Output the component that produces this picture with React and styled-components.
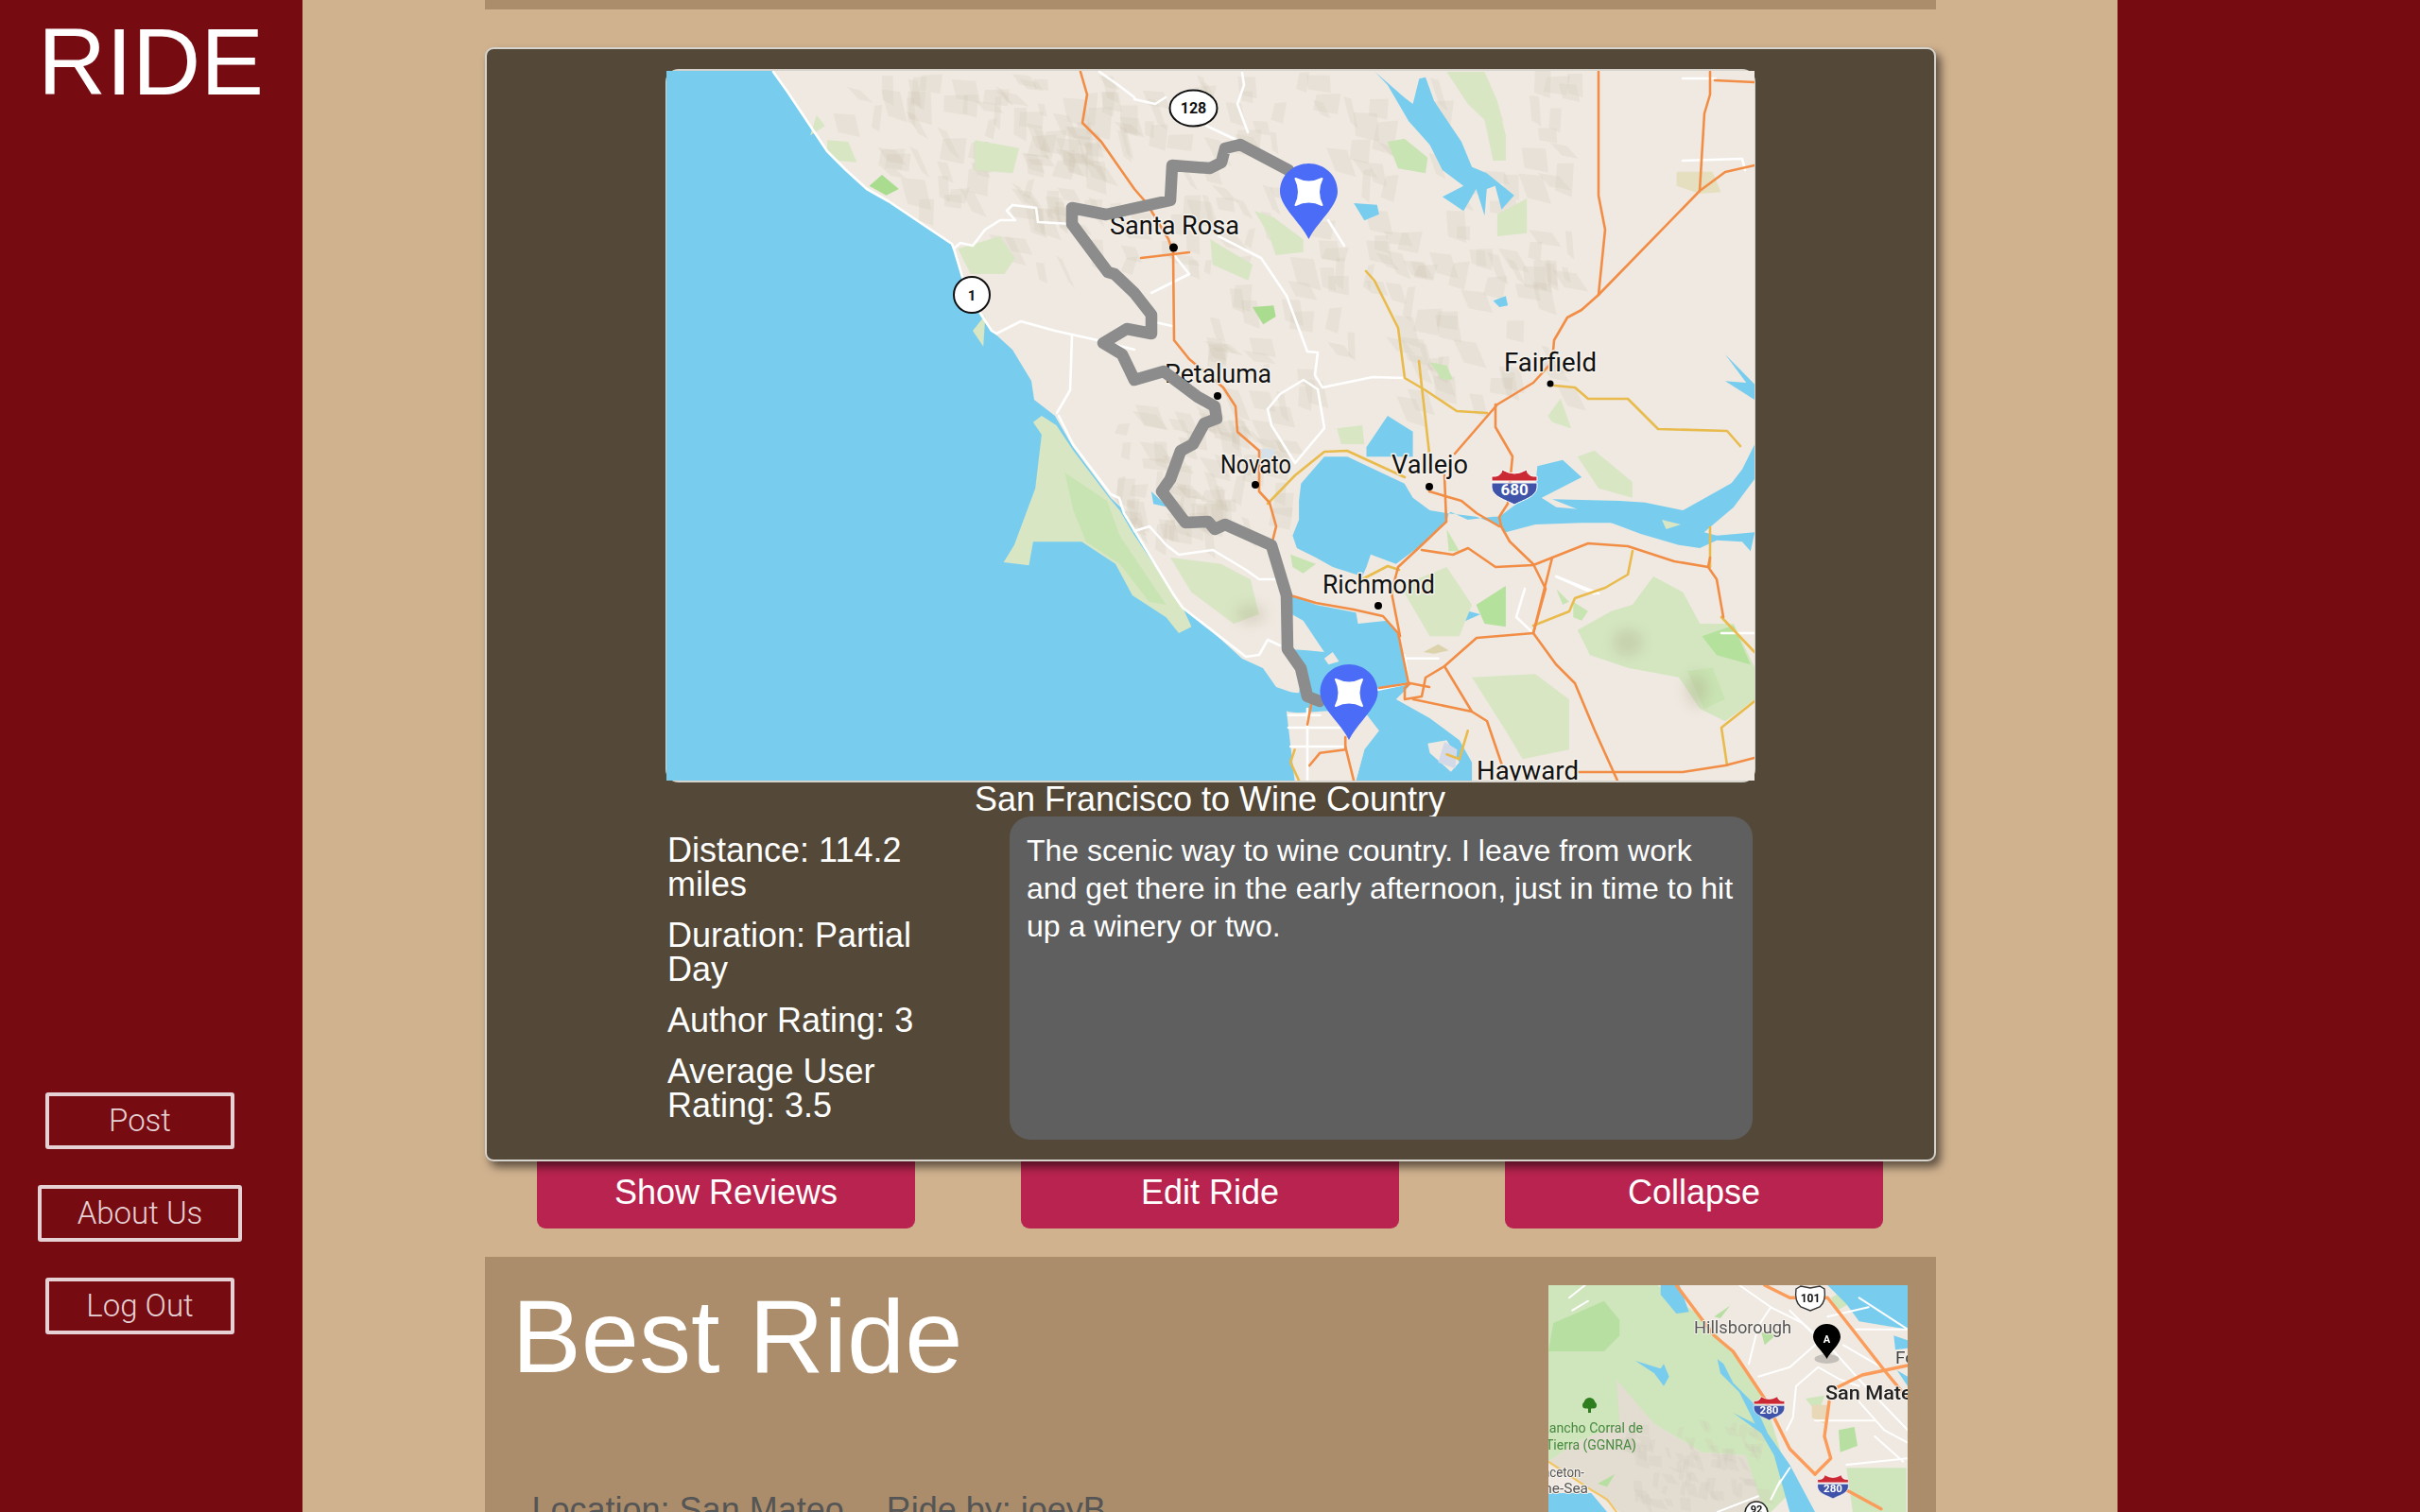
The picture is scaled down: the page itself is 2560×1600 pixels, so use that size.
import React from "react";
import styled, { createGlobalStyle } from "styled-components";

const Global = createGlobalStyle`
  html, body { margin: 0; padding: 0; height: 100%; overflow: hidden; background: #d0b28f; }
  #root { height: 100%; }
`;

const SANS = `"Liberation Sans", Arial, sans-serif`;
const THIN = `Roboto, "Liberation Sans", sans-serif`;

const Page = styled.div`
  display: grid;
  grid-template-columns: 320px 1fr 320px;
  height: 1600px;
  overflow: hidden;
  font-family: ${SANS};
  background: #d0b28f;
`;
const Sidebar = styled.aside`
  background: #770b12;
  display: flex;
  flex-direction: column;
`;
const RightRail = styled.aside`
  background: #770b12;
`;
const Brand = styled.div`
  font-family: ${SANS};
  font-size: 100px;
  line-height: 100px;
  color: #fff;
  padding: 15px 0 0 40px;
`;
const Nav = styled.nav`
  margin-top: 1041px;
  width: 296px;
  display: flex;
  flex-direction: column;
  align-items: center;
  gap: 38px;
`;
const NavButton = styled.button`
  width: ${(p) => (p.$wide ? 216 : 200)}px;
  height: 60px;
  box-sizing: border-box;
  background: transparent;
  border: 4px solid #e6d2d5;
  border-radius: 3px;
  color: #e6d2d5;
  font-family: ${THIN};
  font-weight: 300;
  font-size: 33px;
  padding: 0 0 2px;
`;
const Main = styled.main`
  min-width: 0;
`;
const Column = styled.div`
  width: 1535px;
  margin: 0 auto;
  display: flex;
  flex-direction: column;
`;
const PeekBar = styled.div`
  height: 10px;
  background: #ab8d6b;
  margin-bottom: 40px;
`;
const RideCard = styled.section`
  position: relative;
  z-index: 1;
  box-sizing: border-box;
  height: 1179px;
  background: #544838;
  border: 2px solid #d6d3cd;
  border-radius: 9px;
  padding-top: 21px;
  box-shadow: 5px 6px 10px rgba(0, 0, 0, 0.55);
`;
const MapFrame = styled.div`
  width: 1151px;
  margin: 0 auto;
  border-style: solid;
  border-color: #d6d3cd;
  border-width: 2px 1px;
  border-radius: 14px;
`;
const BigMap = styled.svg`
  display: block;
  width: 1151px;
  height: 751px;
`;
const RideTitle = styled.h2`
  margin: 0;
  font-weight: 400;
  font-size: 36px;
  line-height: 36px;
  height: 36px;
  color: #fff;
  text-align: center;
`;
const Details = styled.div`
  width: 1148px;
  margin: 0 auto;
  display: flex;
  gap: 42px;
`;
const Stats = styled.div`
  width: 320px;
  padding-top: 18px;
  display: flex;
  flex-direction: column;
  gap: 18px;
`;
const Stat = styled.div`
  font-size: 36px;
  line-height: 36px;
  color: #fff;
`;
const Description = styled.div`
  box-sizing: border-box;
  width: 786px;
  height: 342px;
  background: #5f5f5f;
  border-radius: 22px;
  padding: 16px 10px 0 18px;
  font-size: 32px;
  line-height: 40px;
  color: #fff;
`;
const ButtonRow = styled.div`
  display: flex;
  justify-content: center;
  gap: 112px;
  margin-bottom: 30px;
`;
const ActionButton = styled.button`
  width: 400px;
  height: 71px;
  box-sizing: border-box;
  padding: 0 0 6px;
  border: 0;
  border-radius: 0 0 9px 9px;
  background: #b8244f;
  color: #fff;
  font-family: ${SANS};
  font-size: 36px;
`;
const NextPanel = styled.section`
  box-sizing: border-box;
  height: 300px;
  background: #ab8d6b;
  padding: 30px 30px 0 29px;
  display: flex;
  justify-content: space-between;
`;
const PanelText = styled.div`
  display: flex;
  flex-direction: column;
`;
const PanelTitle = styled.h1`
  margin: 0 0 113px;
  font-weight: 400;
  font-size: 110px;
  line-height: 107px;
  color: #fff;
`;
const PanelMeta = styled.div`
  margin-left: 21px;
  display: flex;
  gap: 45px;
  font-size: 36px;
  line-height: 36px;
  color: #555;
`;
const Thumb = styled.svg`
  display: block;
  width: 380px;
  height: 240px;
  filter: blur(0.5px);
`;
const MapLabel = styled.text`
  font-family: Roboto, "Liberation Sans", sans-serif;
  font-size: ${(p) => p.$size || 28}px;
  font-weight: ${(p) => p.$weight || 400};
  fill: ${(p) => p.$color || "#111"};
  stroke: #f6f2ec;
  stroke-width: ${(p) => (p.$halo === undefined ? 3 : p.$halo)}px;
  paint-order: stroke;
  stroke-linejoin: round;
`;
const SignText = styled.text`
  font-family: Roboto, "Liberation Sans", sans-serif;
  font-size: ${(p) => p.$size || 16}px;
  font-weight: 700;
  fill: ${(p) => p.$color || "#111"};
  text-anchor: middle;
`;

/* coordinate systems used while tracing the map */
const ORIGINS = {
  p: [0, 0, 1, 1],
  z1: [500, 0, 1 / 2.24, 1 / 3],
  z2: [1200, 40, 1 / 2.24, 1 / 3],
  z3: [680, 440, 1 / 2.24, 1 / 3],
  z4: [1200, 440, 1 / 2.24, 1 / 3],
  z5: [1600, 1340, 1 / 3, 1 / 3],
};
const pts = (o, s) => {
  const [ox, oy, sx, sy] = ORIGINS[o];
  return s
    .trim()
    .split(/\s+/)
    .map((c) => {
      const [x, y] = c.split(",").map(Number);
      return `${(ox + x * sx).toFixed(1)},${(oy + y * sy).toFixed(1)}`;
    })
    .join(" ");
};

const hills = (seed, boxes, count, size) => {
  let s = seed;
  const r = () => {
    s = (s * 16807) % 2147483647;
    return (s & 65535) / 65535;
  };
  const out = [];
  boxes.forEach(([x0, y0, x1, y1]) => {
    for (let i = 0; i < count; i++) {
      const x = x0 + r() * (x1 - x0);
      const y = y0 + r() * (y1 - y0);
      const w = size * (0.3 + r());
      const h = size * (0.6 + r() * 1.2);
      const k = (r() - 0.3) * size;
      out.push(
        `${x.toFixed(1)},${y.toFixed(1)} ${(x + w).toFixed(1)},${(y + k * 0.3).toFixed(1)} ${(x + w + k).toFixed(1)},${(y + h).toFixed(1)} ${(x + k).toFixed(1)},${(y + h * 0.8).toFixed(1)}`
      );
    }
  });
  return out;
};

const SEA =
  "705,70 818,70 818,76 833,97 857,133 875,160 895,180 917,200 940,213 980,240 1007,258 1018,293 1036,330 1049,350 1071,370 1091,403 1094,423 1116,440 1135,473 1175,527 1189,540 1200,562 1242,630 1251,642 1292,677 1314,697 1336,707 1350,727 1379,737 1361,753 1370,830 705,830";

const LIGHT = "#d8e6c4";
const MID = "#c9e4b3";
const VIVID = "#b4e19c";
const GREENS = [
  ["z3", LIGHT, "945,0 925,20 945,60 930,230 880,410 855,465 915,475 925,400 1040,400 1120,470 1160,570 1240,640 1270,690 1300,670 1280,610 1160,370 1130,300 1105,260 1020,110 980,30"],
  ["z3", MID, "1000,180 1100,270 1130,380 1240,600 1200,590 1130,470 1050,400 1020,300"],
  ["z3", LIGHT, "1250,450 1370,470 1440,520 1460,630 1400,660 1300,560"],
  ["z1", LIGHT, "815,365 835,400 800,430"],
  ["z1", LIGHT, "840,445 890,450 910,515 860,510 840,480"],
  ["z1", "#a9dc8e", "970,555 1010,600 980,620 940,590"],
  ["z1", LIGHT, "1190,445 1295,470 1280,550 1190,540"],
  ["z1", LIGHT, "1150,790 1250,750 1285,820 1260,870 1180,870"],
  ["z1", LIGHT, "1185,1050 1215,1000 1210,1100"],
  ["z2", MID, "600,330 640,320 695,380 690,430 625,415"],
  ["z2", LIGHT, "740,108 830,108 860,200 880,310 880,390 850,390 830,260 790,210"],
  ["z2", LIGHT, "285,550 330,570 400,640 400,680 335,690 320,630"],
  ["z2", LIGHT, "180,640 280,720 270,770 185,720"],
  ["z2", "#a9dc8e", "280,855 330,850 335,885 305,910"],
  ["z2", LIGHT, "860,560 930,510 930,620 860,630"],
  ["z2", MID, "700,1030 740,1040 755,1085 730,1085"],
  ["z2", LIGHT, "980,1200 1010,1145 1035,1240 990,1220"],
  ["z4", LIGHT, "480,40 540,30 545,90 490,90"],
  ["z4", LIGHT, "1050,130 1090,110 1180,210 1180,260 1100,230"],
  ["z4", MID, "370,440 430,470 400,500 375,480"],
  ["z4", MID, "740,360 770,430 745,430"],
  ["z4", LIGHT, "630,540 740,480 800,600 770,700 700,700"],
  ["z4", VIVID, "810,600 880,540 880,670 830,660"],
  ["z4", "#d3e6c0", "1050,680 1130,620 1180,600 1230,510 1300,560 1340,660 1420,660 1470,800 1470,900 1400,970 1340,930 1290,830 1170,800 1080,760"],
  ["z4", VIVID, "1345,700 1420,665 1460,790 1380,760"],
  ["z4", MID, "1310,810 1370,800 1400,900 1350,930"],
  ["z4", LIGHT, "800,830 950,820 1030,900 1030,1060 920,1090 880,1000"],
  ["z4", MID, "1040,590 1075,620 1060,650 1040,640"],
  ["z4", MID, "1000,550 1030,590 1015,600"],
  ["z4", LIGHT, "1250,330 1295,345 1260,360"],
  ["z4", "#dcd3ac", "685,750 720,725 745,745 710,755"],
  ["z2", "#e5dfc0", "1285,425 1370,425 1390,490 1340,495 1285,470"],
  ["z4", "#d6e0e8", "290,105 330,105 335,140 300,140"],
  ["z4", "#d3d9e6", "735,1035 765,1060 760,1120 720,1100"],
];
const WATERS = [
  ["z4", "395,215 450,130 505,130 640,215 660,260 700,300 745,310 740,335 690,400 620,470 560,440 550,480 540,510 470,480 430,450 385,420 375,380 390,330 390,270"],
  ["z4", "745,310 810,320 860,345 880,370 950,345 1060,340 1130,340 1200,375 1290,410 1340,420 1380,395 1440,400 1460,430 1470,370 1380,380 1350,370 1420,290 1470,200 1470,90 1440,170 1400,240 1320,300 1260,310 1190,330 1130,320 1085,300 1000,290 965,260 1060,195 1015,140 955,160 950,225 900,285 865,320 850,320 790,330 750,305"],
  ["z4", "990,265 1150,270 1210,275 1300,300 1420,210 1400,300 1300,400 1130,340"],
  ["z4", "372,570 430,600 525,625 530,660 600,650 625,690 640,800 650,860 620,900 700,960 770,1030 800,1100 800,1158 525,1158 545,1060 530,1010 440,950 365,940 300,870 390,880 400,800 360,740 410,745 450,750 400,650 360,620"],
  ["z2", "570,108 640,190 660,210 675,130 690,125 710,200 775,330 800,410 835,430 900,500 870,545 855,470 835,480 830,565 810,480 780,550 730,505 780,470 730,420 700,340 650,265 600,150"],
  ["z2", "520,525 575,530 580,560 545,580"],
  ["z2", "850,835 880,820 885,850 865,855"],
  ["z2", "550,1300 600,1200 660,1250 660,1330 550,1330"],
  ["z2", "1400,1005 1470,1100 1470,1150 1400,1090 1450,1095"],
  ["z4", "690,590 720,590 760,680"],
  ["z4", "760,610 820,630 770,660"],
  ["z4", "1360,860 1400,830 1410,880 1380,900"],
  ["z4", "40,240 80,290 45,280"],
  ["z3", "940,290 965,260 970,330 995,300 960,380 930,335"],
];
const LANDS = [
  ["z4", "450,770 470,750 485,780 460,790"],
  ["z4", "695,1040 740,1030 770,1100 750,1130 700,1070"],
  ["z4", "365,945 540,930 580,1000 545,1060 525,1158 385,1158"],
];
const WHITE = [
  ["p", "818,76 833,97 857,133 875,160 895,180 917,200 940,213 980,240 1007,258 1009,263 1018,293 1036,330 1049,350 1054,353"],
  ["p", "1071,217 1096,220 1098,235 1134,237"],
  ["p", "1009,263 1016,257 1029,260 1042,243 1058,233 1074,233 1065,223 1071,217"],
  ["p", "1054,353 1080,340 1116,350 1161,360 1200,370"],
  ["p", "1134,355 1132,413 1118,437"],
  ["p", "1289,250 1334,273 1361,313 1383,372 1394,373 1391,397 1399,410 1452,399 1486,400"],
  ["p", "1341,433 1354,417 1379,402 1394,412"],
  ["p", "1341,433 1345,450 1370,490 1401,453 1394,412"],
  ["p", "1314,77 1316,90 1309,110 1320,140"],
  ["p", "1200,105 1222,110 1233,103"],
  ["p", "1276,133 1312,150"],
  ["p", "1405,233 1422,260"],
  ["p", "1163,76 1183,90 1200,103"],
  ["p", "1120,440 1135,470 1175,523 1184,527 1189,543 1242,630 1251,643 1318,695 1332,693 1341,677 1354,683"],
  ["p", "1200,562 1216,557 1234,577 1247,587 1283,582 1318,603 1332,613 1350,613"],
  ["p", "1242,270 1258,290 1218,310"],
  ["p", "1218,340 1240,345"],
  ["p", "1646,610 1691,628"],
  ["p", "1613,623 1604,653 1622,670"],
  ["p", "1821,670 1856,670"],
  ["p", "1780,170 1843,168 1846,180"],
  ["p", "1780,83 1815,83"],
  ["z4", "1000,510 1090,565"],
  ["z4", "640,770 720,770"],
  ["z4", "365,950 440,950"],
  ["z4", "365,990 500,990"],
  ["z4", "410,930 410,1158"],
  ["z4", "370,1050 500,1050"],
  ["z4", "575,870 640,852"],
  ["z4", "640,760 650,850"],
];
const ORANGE = [
  ["p", "1691,76 1691,207 1698,243 1691,312"],
  ["p", "1856,175 1825,182 1798,202 1691,312 1673,328 1658,336 1644,360 1642,383 1622,405 1584,428 1539,480"],
  ["p", "1143,76 1150,100 1145,130 1165,150 1200,200 1213,215 1236,253 1241,267 1242,360 1258,380 1294,410 1307,430 1309,457 1332,477 1332,520 1343,532 1350,557 1345,577"],
  ["p", "1365,630 1392,638 1432,645 1463,652 1479,670 1490,723"],
  ["p", "1207,273 1258,267"],
  ["p", "1809,76 1809,100 1803,120 1798,202"],
  ["p", "1814,85 1856,87"],
  ["p", "1582,428 1582,452 1600,483 1595,533 1586,547 1588,557 1597,573 1622,597 1635,623 1622,670 1646,703 1666,723 1687,773 1711,826"],
  ["p", "1512,520 1546,530 1562,543 1586,557"],
  ["p", "1528,503 1530,552 1508,573 1479,600 1472,627 1481,673"],
  ["p", "1504,582 1537,587 1553,580 1582,600 1622,598 1680,575 1722,578 1771,594 1807,600 1816,613 1823,653"],
  ["p", "1642,590 1622,670"],
  ["p", "1622,670 1562,675 1528,705 1508,717 1504,737 1486,740 1486,728 1492,723 1459,728"],
  ["p", "1528,705 1557,753 1573,763 1588,807 1593,826"],
  ["p", "1495,740 1557,753"],
  ["p", "1492,723 1512,727"],
  ["p", "1669,817 1780,817 1825,810 1856,802"],
  ["p", "1807,600 1809,590"],
  ["z4", "500,1020 500,1060 440,1070 415,1110"],
  ["z4", "500,1050 520,1158"],
  ["z4", "420,910 410,980"],
];
const YELLOW = [
  ["p", "1445,287 1454,297 1479,347 1486,400 1508,413 1541,435 1573,437"],
  ["p", "1501,382 1512,480"],
  ["p", "1644,408 1666,410 1680,422 1722,422 1754,454 1827,456 1841,472"],
  ["p", "1341,533 1370,503 1401,478 1425,477 1486,505"],
  ["p", "1727,583 1722,608 1698,622 1666,633 1660,647 1622,662"],
  ["p", "1441,613 1468,599 1480,603"],
  ["p", "1821,653 1856,690"],
  ["p", "1856,742 1821,770 1827,810"],
  ["p", "1809,600 1809,558"],
  ["z4", "380,1060 370,1100 390,1158"],
  ["z4", "790,1000 770,1090 740,1075"],
];
const ROUTE =
  "1396,742 1383,737 1376,707 1362,687 1361,630 1345,577 1296,555 1285,560 1278,552 1254,553 1229,520 1238,507 1249,477 1262,470 1274,448 1287,443 1285,430 1267,420 1231,393 1200,402 1187,375 1167,363 1192,348 1218,353 1218,333 1200,310 1179,290 1172,288 1134,237 1134,220 1170,227 1238,212 1240,175 1280,178 1292,172 1296,157 1312,153 1363,180";

const HILLS = hills(
  7,
  [
    [880, 76, 1180, 230],
    [1040, 76, 1350, 280],
    [1270, 230, 1650, 420],
    [1330, 70, 1660, 300],
    [1180, 420, 1350, 560],
  ],
  70,
  20
);

const PinShape = ({ x, y }) => (
  <g transform={`translate(${x},${y})`}>
    <path d="M0,80 C-9,62 -30,46 -30.5,30 C-30.5,12 -16,0 0,0 C16,0 30.5,12 30.5,30 C30,46 9,62 0,80Z" fill="#4a6cf7" />
    <path d="M-14,16 Q0,23 14,16 Q7,30 14,44 Q0,37 -14,44 Q-7,30 -14,16Z" fill="#fff" stroke="#fff" strokeWidth="2" strokeLinejoin="round" />
  </g>
);

const Interstate = ({ x, y, label, scale = 1, size = 18 }) => (
  <g transform={`translate(${x},${y}) scale(${scale})`}>
    <path d="M-24,-11 Q-14,-10 -13,-18 Q-6,-14 0,-14 Q6,-14 13,-18 Q14,-10 24,-11 L24,-6 L-24,-6Z" fill="#cb2a35" stroke="#fff" strokeWidth="1" />
    <path d="M-24,-4 L24,-4 L24,1 C23,11 9,14 0,19 C-9,14 -23,11 -24,1Z" fill="#3f53a8" stroke="#fff" strokeWidth="1" />
    <SignText x="0" y="9" $size={size} $color="#fff">{label}</SignText>
  </g>
);

const RideMap = () => (
  <BigMap viewBox="705 75 1151 751" role="img" aria-label="Route map">
    <defs>
      <filter id="shade" x="-50%" y="-50%" width="200%" height="200%">
        <feGaussianBlur stdDeviation="7" />
      </filter>
    </defs>
    <rect x="705" y="75" width="1151" height="751" fill="#efe9e1" />
    {HILLS.map((h, i) => (
      <polygon key={i} points={h} fill="#cbc3b0" opacity={0.2} />
    ))}
    <polygon points={SEA} fill="#78cdee" />
    {WATERS.map(([o, s], i) => (
      <polygon key={i} points={pts(o, s)} fill="#78cdee" />
    ))}
    {LANDS.map(([o, s], i) => (
      <polygon key={i} points={pts(o, s)} fill="#efe9e1" />
    ))}
    {GREENS.map(([o, c, s], i) => (
      <polygon key={i} points={pts(o, s)} fill={c} />
    ))}
    <g fill="#a59a7a" opacity=".28" filter="url(#shade)">
      <ellipse cx="1323" cy="650" rx="16" ry="10" />
      <ellipse cx="1722" cy="680" rx="16" ry="14" />
      <ellipse cx="1795" cy="730" rx="12" ry="18" />
    </g>
    <g fill="none" strokeLinejoin="round" strokeLinecap="round">
      {WHITE.map(([o, s], i) => (
        <polyline key={i} points={pts(o, s)} stroke="#fff" strokeWidth="2.6" />
      ))}
      {YELLOW.map(([o, s], i) => (
        <polyline key={i} points={pts(o, s)} stroke="#e8bb4c" strokeWidth="2.6" />
      ))}
      {ORANGE.map(([o, s], i) => (
        <polyline key={i} points={pts(o, s)} stroke="#f28d46" strokeWidth="2.6" />
      ))}
    </g>
    <g fill="#000">
      <circle cx="1241.5" cy="262" r="4.5" />
      <circle cx="1288" cy="419" r="4" />
      <circle cx="1640" cy="406" r="3.5" />
      <circle cx="1328" cy="513" r="4" />
      <circle cx="1512" cy="515" r="4" />
      <circle cx="1458" cy="641" r="4" />
    </g>
    <MapLabel x="1174" y="248" textLength="137" lengthAdjust="spacingAndGlyphs">Santa Rosa</MapLabel>
    <MapLabel x="1232" y="405" textLength="113" lengthAdjust="spacingAndGlyphs">Petaluma</MapLabel>
    <MapLabel x="1591" y="393" textLength="98" lengthAdjust="spacingAndGlyphs">Fairfield</MapLabel>
    <MapLabel x="1291" y="501" textLength="75" lengthAdjust="spacingAndGlyphs">Novato</MapLabel>
    <MapLabel x="1472" y="501" textLength="81" lengthAdjust="spacingAndGlyphs">Vallejo</MapLabel>
    <MapLabel x="1399" y="628" textLength="119" lengthAdjust="spacingAndGlyphs">Richmond</MapLabel>
    <MapLabel x="1562" y="825" textLength="108" lengthAdjust="spacingAndGlyphs">Hayward</MapLabel>
    <polyline points={ROUTE} fill="none" stroke="#8c8c8c" strokeWidth="12.5" strokeLinejoin="round" strokeLinecap="round" />
    <PinShape x={1384.5} y={173} />
    <PinShape x={1427} y={703} />
    <ellipse cx="1262.5" cy="114.5" rx="25" ry="19" fill="#fff" stroke="#111" strokeWidth="2" />
    <SignText x="1262.5" y="120" $size={16}>128</SignText>
    <circle cx="1028" cy="312" r="19" fill="#fff" stroke="#111" strokeWidth="2" />
    <SignText x="1028" y="318" $size={15}>1</SignText>
    <Interstate x={1602} y={515} label="680" size={17} />
  </BigMap>
);

const T_GREEN = [
  ["#cfe5bb", "114,60 460,60 600,160 720,300 800,420 830,520 860,620 900,700 820,780 600,780 740,600 600,590 450,500 340,500 200,560 114,620"],
  ["#b7dfa1", "130,180 200,150 290,110 340,170 340,220 290,270 114,270"],
  ["#e2ddd0", "330,360 450,500 600,590 740,600 800,780 340,780 240,700 114,620 200,560 340,500"],
  ["#b7dfa1", "270,690 325,660 300,700"],
  ["#cfe5bb", "1010,100 1070,70 1085,110 1030,140"],
  ["#cfe5bb", "930,420 990,410 970,470"],
  ["#b7dfa1", "1035,520 1085,510 1095,570 1040,590"],
  ["#e8d8b8", "950,440 1000,440 990,500 950,480"],
  ["#cfe5bb", "1060,640 1250,640 1250,780 1080,780"],
  ["#b7dfa1", "790,210 840,215 800,250"],
  ["#b7dfa1", "640,160 690,125 660,165"],
];
const T_WATER = [
  "470,60 530,60 560,145 520,150 470,90",
  "390,300 470,325 480,310 497,350 480,380 450,340",
  "650,295 670,310 700,370 770,440 810,530 880,630 960,780 880,780 830,600 790,530 700,465 770,500 720,400 660,340",
  "1000,60 1254,60 1254,200 1100,175 1060,120",
  "114,720 250,720 300,780 114,780",
  "1210,220 1254,235 1254,260 1215,265",
  "1220,330 1254,350 1254,380",
];
const T_WHITE = [
  "720,60 820,130 920,180 1020,270 1110,370 1254,520",
  "820,130 780,190 750,310",
  "880,140 1000,260",
  "1090,200 1254,200",
  "780,350 880,320 960,250",
  "900,380 970,320 1040,360 1100,380",
  "900,380 890,480 870,520",
  "1100,430 1180,520 1254,560",
  "960,490 1150,490",
  "1050,250 1170,320",
  "1000,160 1130,130",
  "1150,540 1240,620",
  "1060,630 1254,610",
  "180,100 230,60",
  "190,140 240,110",
  "840,700 880,640",
  "820,740 850,680",
  "650,780 780,730",
  "1100,100 1254,200",
];
const T_ORANGE = [
  "520,60 640,220 700,270 800,420 880,580 960,660",
  "1060,710 1170,770",
  "800,60 880,100 1000,100 1180,330 1254,420",
  "1030,385 1110,345 1254,315",
  "1005,430 990,540 1010,610 960,660",
];
const THUMB_HILLS = hills(23, [[340, 480, 780, 760]], 70, 34);

const ThumbMap = () => (
  <Thumb viewBox="1638 1360 380 240" role="img" aria-label="Ride preview map">
    <rect x="1638" y="1360" width="380" height="240" fill="#efe9e1" />
    {T_GREEN.map(([c, s], i) => (
      <polygon key={i} points={pts("z5", s)} fill={c} />
    ))}
    {THUMB_HILLS.map((s, i) => (
      <polygon key={i} points={pts("z5", s)} fill="#cfc8b8" opacity={0.2} />
    ))}
    {T_WATER.map((s, i) => (
      <polygon key={i} points={pts("z5", s)} fill="#78cdee" />
    ))}
    <g fill="none" strokeLinejoin="round" strokeLinecap="round">
      {T_WHITE.map((s, i) => (
        <polyline key={i} points={pts("z5", s)} stroke="#fff" strokeWidth="2" />
      ))}
      <polyline points={pts("z5", "114,620 250,710 300,740 330,780")} stroke="#f2c560" strokeWidth="2" />
      {T_ORANGE.map((s, i) => (
        <polyline key={i} points={pts("z5", s)} stroke="#fb9c5a" strokeWidth="3.4" />
      ))}
    </g>
    <g transform="translate(1681.5,1486)" fill="#2e7d1f">
      <rect x="-1.5" y="2" width="3" height="7" />
      <circle cx="0" cy="-1" r="6" />
      <circle cx="-4" cy="1" r="3.5" />
      <circle cx="4" cy="1" r="3.5" />
    </g>
    <MapLabel x="1792" y="1411" $size={19} textLength="103" lengthAdjust="spacingAndGlyphs" $color="#565656" $halo={2}>Hillsborough</MapLabel>
    <MapLabel x="1931" y="1481" $size={21} $weight={500} textLength="104" lengthAdjust="spacingAndGlyphs" $color="#222" $halo={2}>San Mateo</MapLabel>
    <MapLabel x="2005" y="1443" $size={19} $color="#444" $halo={2}>Fo</MapLabel>
    <MapLabel x="1630" y="1516" $size={14} textLength="108" lengthAdjust="spacingAndGlyphs" $color="#47893f" $halo={0}>Rancho Corral de</MapLabel>
    <MapLabel x="1635" y="1534" $size={14} textLength="96" lengthAdjust="spacingAndGlyphs" $color="#47893f" $halo={0}>Tierra (GGNRA)</MapLabel>
    <MapLabel x="1616" y="1563" $size={14} textLength="60" lengthAdjust="spacingAndGlyphs" $color="#555" $halo={2}>Princeton-</MapLabel>
    <MapLabel x="1608" y="1580" $size={14} textLength="72" lengthAdjust="spacingAndGlyphs" $color="#555" $halo={2}>by-the-Sea</MapLabel>
    <Interstate x={1871.5} y={1490} label="280" scale={0.68} size={17} />
    <Interstate x={1939} y={1573} label="280" scale={0.68} size={17} />
    <g transform="translate(1915,1373)">
      <path d="M-15,-9 L-10,-12 L0,-10 L10,-12 L15,-9 C16,-2 16,5 10,10 L0,14 L-10,10 C-16,5 -16,-2 -15,-9Z" fill="#fff" stroke="#333" strokeWidth="1.4" />
      <SignText x="0" y="5" $size={12}>101</SignText>
    </g>
    <circle cx="1858" cy="1601" r="12" fill="#fff" stroke="#222" strokeWidth="1.5" />
    <SignText x="1858" y="1601" $size={11}>92</SignText>
    <ellipse cx="1932.5" cy="1438" rx="13" ry="5" fill="#000" opacity=".18" />
    <g transform="translate(1932.5,1401)">
      <path d="M0,37 C-4,29 -14,22 -14.5,14 C-14.5,6 -8,0 0,0 C8,0 14.5,6 14.5,14 C14,22 4,29 0,37Z" fill="#000" />
      <SignText x="0" y="20" $size={11} $color="#fff">A</SignText>
    </g>
  </Thumb>
);

export default function App() {
  return (
    <>
      <Global />
      <Page>
        <Sidebar>
          <Brand>RIDE</Brand>
          <Nav>
            <NavButton>Post</NavButton>
            <NavButton $wide>About Us</NavButton>
            <NavButton>Log Out</NavButton>
          </Nav>
        </Sidebar>
        <Main>
          <Column>
            <PeekBar />
            <RideCard>
              <MapFrame>
                <RideMap />
              </MapFrame>
              <RideTitle>San Francisco to Wine Country</RideTitle>
              <Details>
                <Stats>
                  <Stat>Distance: 114.2 miles</Stat>
                  <Stat>Duration: Partial Day</Stat>
                  <Stat>Author Rating: 3</Stat>
                  <Stat>Average User Rating: 3.5</Stat>
                </Stats>
                <Description>
                  The scenic way to wine country. I leave from work and get there in the early afternoon, just in time to hit up a winery or two.
                </Description>
              </Details>
            </RideCard>
            <ButtonRow>
              <ActionButton>Show Reviews</ActionButton>
              <ActionButton>Edit Ride</ActionButton>
              <ActionButton>Collapse</ActionButton>
            </ButtonRow>
            <NextPanel>
              <PanelText>
                <PanelTitle>Best Ride</PanelTitle>
                <PanelMeta>
                  <span>Location: San Mateo</span>
                  <span>Ride by: joeyB</span>
                </PanelMeta>
              </PanelText>
              <ThumbMap />
            </NextPanel>
          </Column>
        </Main>
        <RightRail />
      </Page>
    </>
  );
}
